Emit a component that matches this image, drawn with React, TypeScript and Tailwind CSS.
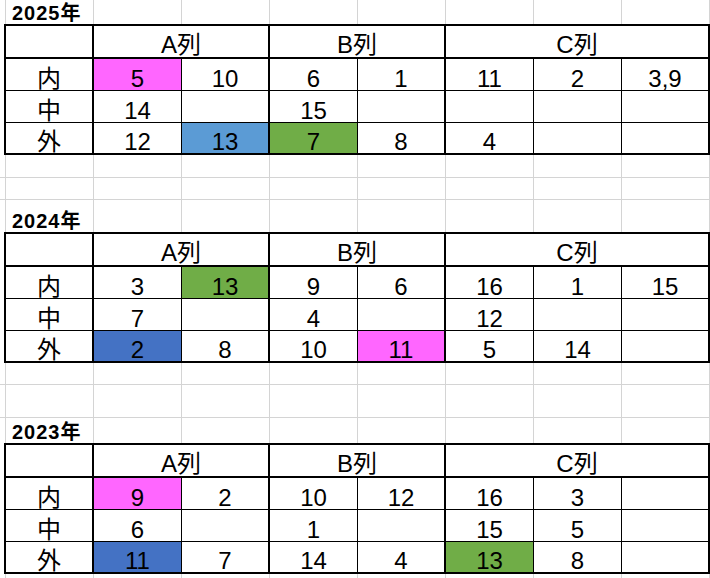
const FILL: Record<string, string> = {
  p: "bg-[#ff66ff]",
  lb: "bg-[#5b9bd5]",
  b: "bg-[#4472c4]",
  g: "bg-[#70ad47]",
}

// 7 data columns: A(2) B(2) C(3); thick line after each group
const CELL = [
  "w-[88px] border-r",
  "w-[88px] border-r-2",
  "w-[88px] border-r",
  "w-[88px] border-r-2",
  "w-[88px] border-r",
  "w-[88px] border-r",
  "w-[86px]",
]

type Cell = string | [string, string]
type Sheet = { year: string; rows: [string, Cell[]][] }

const sheets: Sheet[] = [
  {
    year: "2025年",
    rows: [
      ["内", [["5", "p"], "10", "6", "1", "11", "2", "3,9"]],
      ["中", ["14", "", "15", "", "", "", ""]],
      ["外", ["12", ["13", "lb"], ["7", "g"], "8", "4", "", ""]],
    ],
  },
  {
    year: "2024年",
    rows: [
      ["内", ["3", ["13", "g"], "9", "6", "16", "1", "15"]],
      ["中", ["7", "", "4", "", "12", "", ""]],
      ["外", [["2", "b"], "8", "10", ["11", "p"], "5", "14", ""]],
    ],
  },
  {
    year: "2023年",
    rows: [
      ["内", [["9", "p"], "2", "10", "12", "16", "3", ""]],
      ["中", ["6", "", "1", "", "15", "5", ""]],
      ["外", [["11", "b"], "7", "14", "4", ["13", "g"], "8", ""]],
    ],
  },
]

function GridRow({ h, label, last = true }: { h: string; label?: string; last?: boolean }) {
  const line = last ? "border-r border-b border-[#d4d4d4]" : "border-r border-[#d4d4d4]"
  return (
    <div className={`flex ${h}`}>
      <div className={`w-[6px] shrink-0 ${line}`} />
      <div className={`w-[88px] shrink-0 flex items-end pl-[6px] pb-[1px] ${line}`}>
        {label && (
          <span className="whitespace-nowrap text-[20px] leading-[20px] font-bold tracking-[1px]">
            {label}
          </span>
        )}
      </div>
      {Array.from({ length: 7 }).map((_, i) => (
        <div key={i} className={`w-[88px] shrink-0 ${line}`} />
      ))}
    </div>
  )
}

function Table({ sheet }: { sheet: Sheet }) {
  return (
    <div className="ml-[4px] w-[706px] border-2 border-black bg-white">
      <div className="flex h-[33px] border-b-2 border-black">
        <div className="w-[88px] border-r-2 border-black" />
        {["A列", "B列", "C列"].map((t, i) => (
          <div
            key={t}
            className={`flex items-end justify-center pb-[1px] leading-[22px] ${
              i < 2 ? "w-[176px] border-r-2 border-black" : "w-[262px]"
            }`}
          >
            {t}
          </div>
        ))}
      </div>
      {sheet.rows.map(([label, cells], r) => (
        <div
          key={label}
          className={`flex ${r < 2 ? "h-[32px] border-b border-black" : "h-[30px]"}`}
        >
          <div className="w-[88px] flex items-end justify-center border-r-2 border-black leading-[22px]">
            {label}
          </div>
          {cells.map((c, i) => {
            const [text, fill] = typeof c === "string" ? [c, ""] : [c[0], FILL[c[1]]]
            return (
              <div
                key={i}
                className={`flex items-end justify-center border-black leading-[22px] ${CELL[i]} ${fill}`}
              >
                {text}
              </div>
            )
          })}
        </div>
      ))}
    </div>
  )
}

export default function App() {
  return (
    <div className="w-[710px] h-[578px] overflow-hidden bg-white text-black text-[24px] font-['Liberation_Sans','Noto_Sans_CJK_JP',sans-serif]">
      <GridRow h="h-[24px]" label={sheets[0].year} last={false} />
      <Table sheet={sheets[0]} />
      <GridRow h="h-[23px]" />
      <GridRow h="h-[22px]" />
      <GridRow h="h-[32px]" label={sheets[1].year} last={false} />
      <Table sheet={sheets[1]} />
      <GridRow h="h-[22px]" />
      <GridRow h="h-[33px]" />
      <GridRow h="h-[25px]" label={sheets[2].year} last={false} />
      <Table sheet={sheets[2]} />
      <GridRow h="h-[33px]" />
    </div>
  )
}
